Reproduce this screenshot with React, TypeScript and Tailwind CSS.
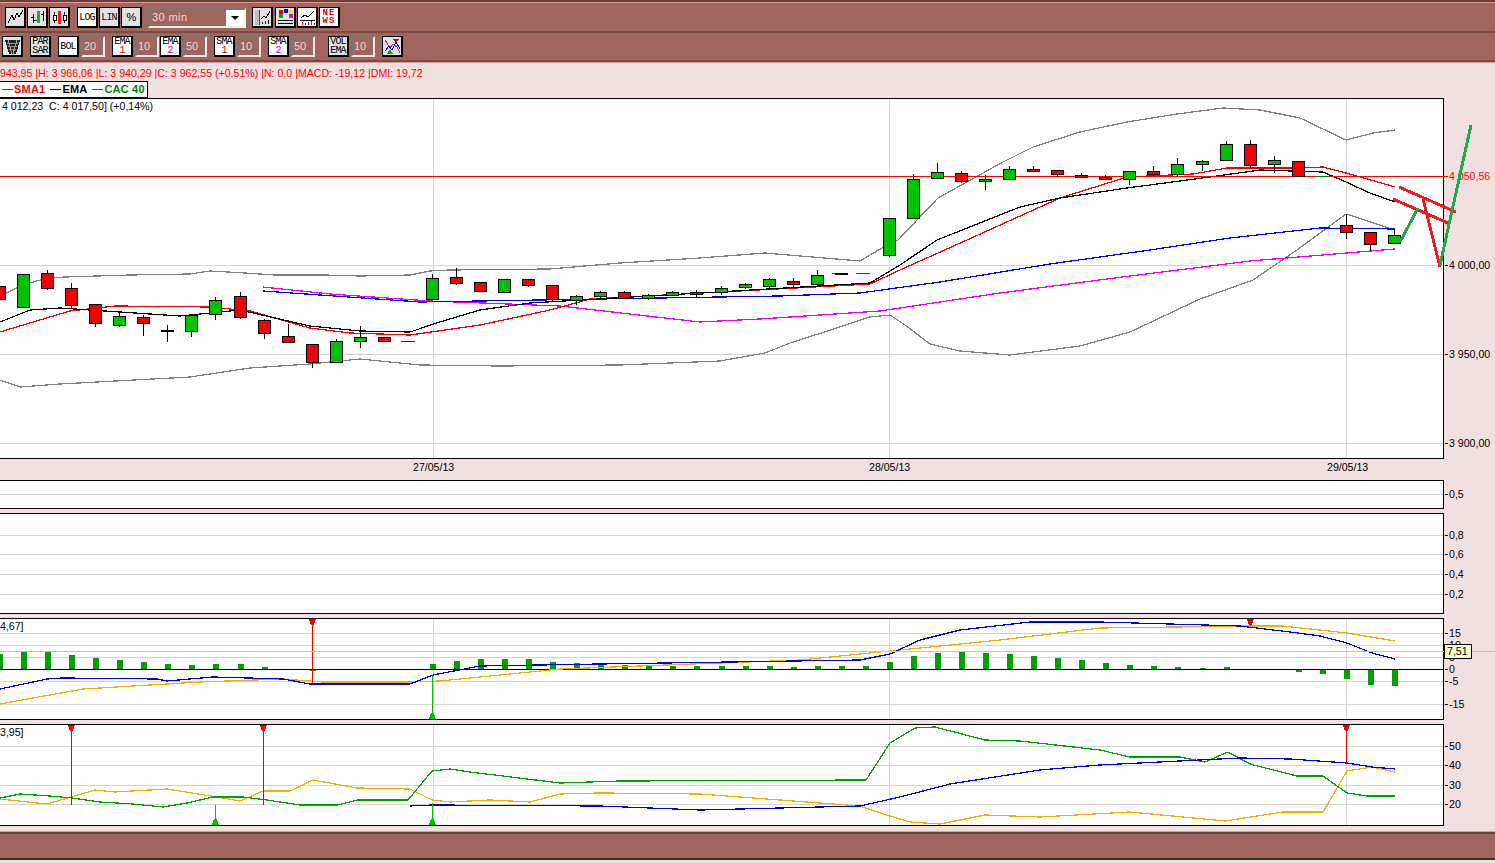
import type { ReactNode } from 'react';

type Candle = [number, 'g' | 'r', number, number, number, number];

const FONT = "font-['Liberation_Sans',Arial,sans-serif]";

// index, colour, body top, body bottom, wick top, wick bottom
const candles: Candle[] = [
  [0, 'r', 286, 299, 286, 299], [1, 'g', 274, 307, 274, 307], [2, 'r', 273, 288, 270, 290],
  [3, 'r', 288, 305, 283, 309], [4, 'r', 304, 323, 304, 327], [5, 'g', 316, 325, 311, 327],
  [6, 'r', 317, 323, 315, 336], [7, 'r', 330, 331, 325, 342], [8, 'g', 315, 331, 315, 337],
  [9, 'g', 300, 314, 297, 320], [10, 'r', 296, 317, 292, 319], [11, 'r', 320, 333, 319, 339],
  [12, 'r', 336, 342, 324, 342], [13, 'r', 344, 362, 344, 368], [14, 'g', 341, 362, 339, 363],
  [15, 'g', 337, 341, 326, 348], [16, 'r', 337, 341, 337, 341],
  [18, 'g', 278, 299, 274, 299], [19, 'r', 277, 283, 268, 285], [20, 'r', 282, 291, 282, 291],
  [21, 'g', 279, 292, 279, 292], [22, 'r', 279, 285, 279, 287], [23, 'r', 285, 299, 285, 301],
  [24, 'g', 296, 300, 295, 305], [25, 'g', 292, 296, 291, 298], [26, 'r', 292, 298, 291, 299],
  [27, 'g', 295, 298, 294, 300], [28, 'g', 292, 295, 291, 296], [29, 'r', 292, 294, 290, 297],
  [30, 'g', 288, 292, 286, 295], [31, 'g', 284, 287, 283, 289], [32, 'g', 279, 286, 278, 290],
  [33, 'r', 281, 284, 278, 287], [34, 'g', 275, 284, 270, 286], [35, 'g', 273, 274, 273, 274],
  [37, 'g', 218, 255, 218, 257], [38, 'g', 179, 218, 174, 218], [39, 'g', 172, 178, 163, 178],
  [40, 'r', 173, 181, 171, 183], [41, 'g', 179, 181, 175, 190], [42, 'g', 169, 179, 166, 180],
  [43, 'r', 169, 171, 166, 172], [44, 'r', 170, 174, 170, 177], [45, 'r', 175, 177, 173, 177],
  [46, 'r', 177, 179, 175, 179], [47, 'g', 171, 179, 171, 185], [48, 'r', 171, 174, 166, 176],
  [49, 'g', 164, 174, 158, 177], [50, 'g', 161, 164, 160, 171], [51, 'g', 144, 160, 141, 160],
  [52, 'r', 144, 165, 140, 168], [53, 'g', 160, 164, 156, 173], [54, 'r', 161, 176, 161, 176],
  [56, 'r', 225, 232, 214, 239], [57, 'r', 232, 244, 232, 251], [58, 'g', 235, 243, 229, 243],
];

// histogram heights above (+) or below (-) the zero line, keyed by index
const histogram: [number, number][] = [
  [0, 15], [1, 17], [2, 17], [3, 14], [4, 11], [5, 9], [6, 7], [7, 5], [8, 4], [9, 5], [10, 5], [11, 2],
  [13, -2], [14, -1], [15, -1], [18, 5], [19, 8], [20, 10], [21, 10], [22, 10], [23, 7], [24, 6], [25, 5],
  [26, 4], [27, 3], [28, 3], [29, 3], [30, 3], [31, 3], [32, 3], [33, 2], [34, 3], [35, 3], [36, 3],
  [37, 7], [38, 13], [39, 16], [40, 17], [41, 16], [42, 15], [43, 13], [44, 11], [45, 9], [46, 6], [47, 4],
  [48, 3], [49, 2], [50, 1], [51, 2], [54, -3], [55, -5], [56, -10], [57, -16], [58, -17],
];

const bollUp = '0,296 23,285 47,278 65,277 130,275 190,274 210,271 245,273 275,275 325,275 360,276 410,275 430,271 450,270 550,269 620,263 700,258 765,253 800,256 860,261 887,245 898,240 938,198 983,173 1003,162 1033,147 1080,132 1127,122 1177,114 1223,108 1260,110 1300,118 1346,140 1373,133 1395,130';
const bollDown = '0,380 20,387 60,384 190,377 250,368 310,364 360,359 420,365 500,366 620,365 720,361 765,353 790,343 840,327 870,317 890,315 905,325 930,344 960,351 1010,355 1080,346 1130,332 1200,299 1253,280 1297,250 1346,214 1395,230';
const sma = '0,332 70,311 115,306 210,307 250,311 310,328 350,333 410,335 480,325 550,310 590,299 870,284 900,270 967,240 1060,198 1127,177 1193,174 1227,168 1300,168 1323,167 1346,173 1395,187';
const ema = '0,322 30,310 60,308 120,312 180,316 240,310 310,326 360,331 410,332 440,322 480,310 530,303 870,283 900,265 937,240 1020,207 1060,198 1127,188 1210,177 1260,170 1323,172 1346,182 1370,193 1395,202';
const blueLong = '263,291 320,295 420,302 600,299 780,296 860,293 940,282 1050,264 1150,250 1230,238 1320,228 1395,229';
const magenta = '263,287 330,294 430,301 560,306 700,322 760,319 880,311 1000,293 1130,276 1250,261 1395,249';

const macdBlue = '0,689 47,679 62,678 157,679 167,681 213,677 283,679 310,684 410,684 433,675 480,666 600,664 860,660 890,654 920,640 960,630 1030,622 1100,622 1240,626 1290,632 1320,636 1347,643 1372,653 1395,659';
const macdOrange = '0,704 83,689 150,685 200,682 283,679 323,682 410,682 440,681 560,669 800,660 1000,640 1100,628 1250,626 1283,626 1347,633 1395,641';

const dmiGreen = '0,798 20,794 50,796 72,798 100,802 133,804 163,807 187,803 213,797 243,797 267,800 300,805 337,805 358,800 408,800 432,771 450,769 470,772 560,783 620,781 866,780 890,743 915,728 935,727 985,740 1020,741 1100,750 1130,757 1180,757 1205,762 1228,752 1250,764 1297,776 1323,776 1347,793 1367,796 1395,796';
const dmiOrange = '0,799 47,804 95,790 115,792 167,789 217,797 240,801 263,791 290,791 313,780 357,788 410,789 432,800 450,802 490,800 530,802 560,794 600,793 700,794 860,806 880,813 910,822 940,824 985,815 1040,817 1130,812 1225,821 1283,812 1323,812 1347,771 1372,767 1395,772';
const dmiBlue = '410,806 432,805 600,806 700,810 860,806 900,797 950,784 1040,770 1100,765 1200,760 1240,758 1290,759 1347,763 1372,767 1395,769';

const cx = (i: number) => Math.round(i * 24.05);

function Line({ points, color, width = 1.25 }: { points: string; color: string; width?: number }) {
  return <polyline points={points} fill="none" stroke={color} strokeWidth={width} shapeRendering="crispEdges" />;
}

function Rule({ y, color = '#d4d4d4', x2 = 1443 }: { y: number; color?: string; x2?: number }) {
  return <line x1={0} x2={x2} y1={y + 0.5} y2={y + 0.5} stroke={color} shapeRendering="crispEdges" />;
}

function VRule({ x, y1, y2, color = '#d4d4d4' }: { x: number; y1: number; y2: number; color?: string }) {
  return <line x1={x + 0.5} x2={x + 0.5} y1={y1} y2={y2} stroke={color} shapeRendering="crispEdges" />;
}

function AxisLabel({ y, children, color = '#000' }: { y: number; children: ReactNode; color?: string }) {
  return (
    <g>
      <line x1={1445} x2={1448} y1={y + 0.5} y2={y + 0.5} stroke={color} shapeRendering="crispEdges" />
      <text x={1449} y={y + 4} fontSize={10.6} fill={color}>{children}</text>
    </g>
  );
}

function SignalDown({ x, y1, y2 }: { x: number; y1: number; y2: number }) {
  return (
    <g shapeRendering="crispEdges">
      <VRule x={x} y1={y1} y2={y2} color="#f00000" />
      <polygon points={`${x - 3},${y1} ${x + 4},${y1} ${x + 2},${y1 + 6} ${x - 1},${y1 + 6}`} fill="#f00000" />
    </g>
  );
}

function SignalUp({ x, y1, y2 }: { x: number; y1: number; y2: number }) {
  return (
    <g shapeRendering="crispEdges">
      <VRule x={x} y1={y1} y2={y2} color="#00c000" />
      <polygon points={`${x - 3},${y2} ${x + 4},${y2} ${x + 2},${y2 - 6} ${x - 1},${y2 - 6}`} fill="#00c000" />
    </g>
  );
}

function ToolButton({ children, white, className = '' }: { children: ReactNode; white?: boolean; className?: string }) {
  return (
    <div
      className={`w-[21px] h-[21px] shrink-0 flex flex-col items-center justify-center border-r-2 border-b-2 border-t border-l border-black font-['Liberation_Mono',monospace] leading-[9px] text-[10px] tracking-[-0.8px] text-black ${white ? 'bg-white' : 'bg-[#e2e2e2]'} ${className}`}
    >
      {children}
    </div>
  );
}

function ValueBox({ value }: { value: string }) {
  return (
    <div className="w-[24px] h-[21px] shrink-0 flex items-center pl-[1px] text-[11px] text-[#ead8d4] bg-[#a0665e] border-2 border-t-[#777] border-l-[#777] border-r-[#f4eeee] border-b-[#f4eeee]">
      {value}
    </div>
  );
}

function Icon({ children }: { children: ReactNode }) {
  return <svg width="17" height="17" viewBox="0 0 17 17" shapeRendering="crispEdges">{children}</svg>;
}

function Panel({ top, h, className = '', children }: { top: number; h: number; className?: string; children: ReactNode }) {
  return (
    <div className={`w-[1444px] bg-white border-y border-r border-black ${className}`} style={{ height: h + 2 }}>
      <svg width={1495} height={h} viewBox={`0 ${top} 1495 ${h}`} className={`block overflow-visible ${FONT}`}>
        {children}
      </svg>
    </div>
  );
}

export default function App() {
  return (
    <div className={`w-[1495px] h-[863px] overflow-hidden bg-[#f0e0e0] flex flex-col ${FONT}`}>
      {/* toolbars */}
      <div className="h-[33px] bg-[#a0665e] border-t-2 border-t-[#6b3f3a] border-b-2 border-b-[#7a4a44] flex items-center pl-[5px] pt-[2px] shrink-0 shadow-[inset_0_1px_0_#d99c94]">
        <div className="flex gap-px">
          <ToolButton>
            <Icon><polyline points="1,14 5,6 7,11 10,4 12,8 16,1" fill="none" stroke="#000" /></Icon>
          </ToolButton>
          <ToolButton>
            <Icon>
              <path d="M2 8h3M4.5 5v9M5 11h2M9 11h-2" stroke="#000" fill="none" />
              <path d="M9.5 2v12" stroke="#22a84a" strokeWidth="3" fill="none" />
              <path d="M14.5 2v10M12 5h3" stroke="#000" fill="none" />
            </Icon>
          </ToolButton>
          <ToolButton>
            <Icon>
              <path d="M3.5 3v11M13.5 3v11" stroke="#000" fill="none" />
              <rect x="2" y="6" width="3" height="5" fill="#fff" stroke="#000" />
              <rect x="7" y="2" width="3" height="13" fill="#ee1c25" />
              <rect x="12" y="6" width="3" height="5" fill="#fff" stroke="#000" />
            </Icon>
          </ToolButton>
        </div>
        <div className="flex gap-px ml-[7px]">
          <ToolButton white>LOG</ToolButton>
          <ToolButton>LIN</ToolButton>
          <ToolButton><span className="text-[11px] font-['Liberation_Sans',sans-serif]">%</span></ToolButton>
        </div>
        <div className="ml-[6px] w-[98px] h-[20px] flex border-2 border-t-[#777] border-l-[#777] border-r-[#f4eeee] border-b-[#f4eeee]">
          <div className="flex-1 flex items-center pl-[2px] text-[11px] tracking-[0.4px] text-[#ead8d4]">30 min</div>
          <div className="w-[18px] bg-white flex items-center justify-center">
            <div className="w-0 h-0 border-x-[4px] border-x-transparent border-t-[4px] border-t-black" />
          </div>
        </div>
        <div className="flex gap-px ml-[6px]">
          <ToolButton>
            <Icon>
              <rect x="1" y="1" width="5" height="15" fill="#bdbdbd" />
              <path d="M5.5 1v15" stroke="#d01010" fill="none" />
              <polyline points="7,10 10,7 12,9 16,2" fill="none" stroke="#000" />
              <path d="M8 15v-2M11 15v-3M14 15v-4" stroke="#000" fill="none" />
            </Icon>
          </ToolButton>
          <ToolButton className="ml-px">
            <Icon>
              <rect x="2" y="1" width="4" height="4" fill="#e00000" />
              <rect x="7" y="0" width="4" height="4" fill="#0000e0" />
              <rect x="12" y="1" width="4" height="4" fill="#e8e800" />
              <rect x="2" y="5" width="4" height="4" fill="#00b000" />
              <rect x="12" y="5" width="4" height="4" fill="#e000e0" />
              <path d="M1 11h15M1 14h15" stroke="#000" fill="none" />
            </Icon>
          </ToolButton>
          <ToolButton white>
            <Icon>
              <polyline points="2,9 6,6 9,8 15,2" fill="none" stroke="#000" />
              <path d="M1 11h15" stroke="#000" fill="none" />
              <path d="M3 16v-3M6 16v-2M9 16v-3M12 16v-4M15 16v-2" stroke="#d01010" fill="none" />
            </Icon>
          </ToolButton>
          <ToolButton white>
            <div className="flex flex-col items-center font-bold text-[9px] leading-[8px] text-[#e00000] tracking-[1px]">
              <span>NE</span>
              <span>WS</span>
            </div>
          </ToolButton>
        </div>
      </div>

      <div className="h-[29px] bg-[#a0665e] border-b-2 border-b-[#7a4a44] flex items-center pl-[2px] shrink-0 shadow-[0_1px_0_#d99c94]">
        <ToolButton>
          <Icon>
            <polygon points="1,2 16,2 12,16 5,16" fill="#222" />
            <path d="M3 5h11M4 8h9M5 11h7M4 2l4 14M13 2l-4 14" stroke="#9a9a9a" fill="none" />
          </Icon>
        </ToolButton>
        <ToolButton className="ml-[7px]">
          <span>PAR</span>
          <span>SAR</span>
        </ToolButton>
        <ToolButton white className="ml-[7px]">BOL</ToolButton>
        <div className="ml-[2px]"><ValueBox value="20" /></div>
        <ToolButton white className="ml-[7px]"><span>EMA</span><span className="text-[#e00000]">1</span></ToolButton>
        <div className="ml-[2px]"><ValueBox value="10" /></div>
        <ToolButton white className="ml-px"><span>EMA</span><span className="text-[#c000c0]">2</span></ToolButton>
        <div className="ml-[2px]"><ValueBox value="50" /></div>
        <ToolButton white className="ml-[7px]"><span>SMA</span><span className="text-[#e00000]">1</span></ToolButton>
        <div className="ml-[2px]"><ValueBox value="10" /></div>
        <ToolButton white className="ml-[7px]"><span>SMA</span><span className="text-[#c000c0]">2</span></ToolButton>
        <div className="ml-[2px]"><ValueBox value="50" /></div>
        <ToolButton className="ml-[13px]"><span>VOL</span><span>EMA</span></ToolButton>
        <div className="ml-[2px]"><ValueBox value="10" /></div>
        <ToolButton className="ml-[7px]">
          <Icon>
            <polygon points="9,1 15,1 12,5" fill="#e00000" />
            <polygon points="3,16 9,16 6,11" fill="#00b000" />
            <polyline points="1,2 6,10 9,6 13,9 16,15" fill="none" stroke="#e000e0" />
            <polyline points="1,13 5,8 8,12 12,4 16,11" fill="none" stroke="#0000d0" />
          </Icon>
        </ToolButton>
      </div>

      {/* quote line */}
      <div className="h-[19px] mt-[2px] pt-[3px] text-[10.6px] leading-[13px] text-[#ff0000] whitespace-nowrap shrink-0">
        943,95 |H: 3 966,06 |L: 3 940,29 |C: 3 962,55 (+0,51%) |N: 0,0 |MACD: -19,12 |DMI: 19,72
      </div>

      {/* legend */}
      <div className="w-[148px] h-[17px] -mt-[2px] shrink-0 flex items-center gap-[5px] pl-[2px] border border-l-0 border-black bg-white text-[11px] tracking-[0.2px] font-bold whitespace-nowrap">
        <span className="text-[#ff0000] flex items-center"><span className="w-[11px] h-px bg-[#ff0000] mr-px" />SMA1</span>
        <span className="text-black flex items-center"><span className="w-[11px] h-px bg-black mr-px" />EMA</span>
        <span className="text-[#008000] flex items-center"><span className="w-[11px] h-px bg-[#008000] mr-px" />CAC 40</span>
      </div>

      {/* main chart */}
      <Panel top={99} h={359} className="shrink-0">
        <text x={2} y={110} fontSize={10.6} fill="#000">4 012,23&nbsp; C: 4 017,50] (+0,14%)</text>
        <Rule y={265} />
        <Rule y={354} />
        <Rule y={443} />
        <VRule x={433} y1={99} y2={458} />
        <VRule x={889} y1={99} y2={458} />
        <VRule x={1346} y1={99} y2={458} />
        <Line points={bollUp} color="#808080" />
        <Line points={bollDown} color="#808080" />
        <Line points={magenta} color="#f000f0" />
        <Line points={blueLong} color="#0000e0" />
        <Line points={sma} color="#f00000" />
        <Line points={ema} color="#000" />
        <line x1={0} x2={1447} y1={176.5} y2={176.5} stroke="#ff0000" shapeRendering="crispEdges" />
        <line x1={1316} x2={1330} y1={176.5} y2={176.5} stroke="#008000" shapeRendering="crispEdges" />
        <line x1={401} x2={415} y1={341.5} y2={341.5} stroke="#006000" shapeRendering="crispEdges" />
        <line x1={832} x2={846} y1={273.5} y2={273.5} stroke="#006000" shapeRendering="crispEdges" />
        <line x1={856} x2={870} y1={273.5} y2={273.5} stroke="#006000" shapeRendering="crispEdges" />
        <g shapeRendering="crispEdges">
          {candles.map(([i, c, top, bottom, wt, wb]) => (
            <g key={i}>
              <line x1={cx(i) - 0.5} x2={cx(i) - 0.5} y1={wt} y2={wb} stroke="#000" />
              <rect x={cx(i) - 6.5} y={top + 0.5} width={12} height={bottom - top} fill={c === 'g' ? '#00c000' : '#f00000'} stroke="#000" />
            </g>
          ))}
        </g>
        <AxisLabel y={176} color="#ff0000">4 050,56</AxisLabel>
        <AxisLabel y={265}>4 000,00</AxisLabel>
        <AxisLabel y={354}>3 950,00</AxisLabel>
        <AxisLabel y={443}>3 900,00</AxisLabel>
        {/* hand drawn trend marks */}
        <g fill="none" strokeWidth={3} shapeRendering="crispEdges">
          <polyline points="1399,187 1456,212" stroke="#ed1c24" />
          <polyline points="1393,199 1448,223" stroke="#ed1c24" />
          <polyline points="1423,199 1440,267" stroke="#ed1c24" />
          <polyline points="1400,242 1418,208" stroke="#22a84a" />
          <polyline points="1440,265 1471,125" stroke="#22a84a" />
        </g>
      </Panel>

      {/* dates */}
      <div className="h-[21px] shrink-0 relative text-[10.6px] leading-[16px] w-[1444px]">
        <span className="absolute left-[413px] top-0">27/05/13</span>
        <span className="absolute left-[869px] top-0">28/05/13</span>
        <span className="absolute left-[1327px] top-0">29/05/13</span>
      </div>

      <Panel top={481} h={27} className="shrink-0 -mb-px">
        <Rule y={494} />
        <AxisLabel y={494}>0,5</AxisLabel>
      </Panel>

      <Panel top={514} h={99} className="shrink-0 mt-[5px]">
        <Rule y={535} /><Rule y={554} /><Rule y={574} /><Rule y={594} />
        <AxisLabel y={535}>0,8</AxisLabel>
        <AxisLabel y={554}>0,6</AxisLabel>
        <AxisLabel y={574}>0,4</AxisLabel>
        <AxisLabel y={594}>0,2</AxisLabel>
      </Panel>

      {/* MACD */}
      <Panel top={619} h={100} className="shrink-0 mt-[4px]">
        <text x={0} y={630} fontSize={10.6} fill="#000">4,67]</text>
        <Rule y={633} /><Rule y={645} /><Rule y={657} /><Rule y={681} /><Rule y={704} />
        <VRule x={433} y1={619} y2={719} /><VRule x={889} y1={619} y2={719} /><VRule x={1346} y1={619} y2={719} />
        <g shapeRendering="crispEdges">
          {histogram.map(([i, v]) => (
            <rect key={i} x={cx(i) - 3} y={v > 0 ? 669 - v : 669} width={6} height={Math.abs(v)} fill="#00a000" />
          ))}
        </g>
        <Rule y={669} color="#000" />
        <Line points={macdOrange} color="#f0b000" />
        <Line points={macdBlue} color="#0000d8" />
        <SignalDown x={312} y1={619} y2={683} />
        <SignalDown x={1250} y1={619} y2={626} />
        <SignalUp x={432} y1={676} y2={719} />
        <AxisLabel y={633}>15</AxisLabel>
        <AxisLabel y={645}>10</AxisLabel>
        <AxisLabel y={657}>5</AxisLabel>
        <AxisLabel y={669}>0</AxisLabel>
        <AxisLabel y={681}>-5</AxisLabel>
        <AxisLabel y={704}>-15</AxisLabel>
        {/* crosshair and value tip */}
        <line x1={0} x2={1495} y1={651.5} y2={651.5} stroke="#c4c4c4" shapeRendering="crispEdges" />
        <rect x={1444.5} y={644.5} width={27} height={14} fill="#ffffcc" stroke="#000" shapeRendering="crispEdges" />
        <text x={1447} y={655} fontSize={10.6} fill="#000">7,51</text>
      </Panel>

      {/* DMI */}
      <Panel top={725} h={100} className="shrink-0 mt-[4px]">
        <text x={0} y={736} fontSize={10.6} fill="#000">3,95]</text>
        <Rule y={746} /><Rule y={765} /><Rule y={785} /><Rule y={804} />
        <VRule x={433} y1={725} y2={825} /><VRule x={889} y1={725} y2={825} /><VRule x={1346} y1={725} y2={825} />
        <Line points={dmiOrange} color="#f0b000" />
        <Line points={dmiGreen} color="#00a000" />
        <Line points={dmiBlue} color="#0000d8" />
        <SignalDown x={71} y1={725} y2={805} />
        <SignalDown x={263} y1={725} y2={805} />
        <SignalDown x={1346} y1={725} y2={764} />
        <SignalUp x={215} y1={805} y2={825} />
        <SignalUp x={432} y1={803} y2={825} />
        <AxisLabel y={746}>50</AxisLabel>
        <AxisLabel y={765}>40</AxisLabel>
        <AxisLabel y={785}>30</AxisLabel>
        <AxisLabel y={804}>20</AxisLabel>
      </Panel>

      {/* status bar */}
      <div className="h-[28px] mt-[6px] shrink-0 bg-[#a0665e] border-t-2 border-t-[#6b3f3a] border-b-2 border-b-[#333] shadow-[0_-1px_0_#e0a098]" />
    </div>
  );
}
